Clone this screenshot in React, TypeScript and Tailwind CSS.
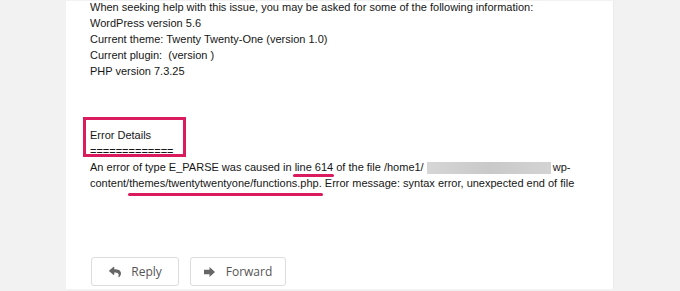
import React from "react";
import { FaReply } from "react-icons/fa";

const RED = "#da1b5e";

export default function App() {
  return (
    <div className="w-[680px] h-[291px] bg-[#f2f2f2] flex pl-[66px] pt-[1px] pb-[2px] overflow-hidden">
      <div className="w-[548px] bg-white flex flex-col pl-[24px] border-r border-[#ebebeb]">
        <div
          className="-mt-[2px] text-[11px] leading-[16px] text-[#161616]"
          style={{ fontFamily: '"Liberation Sans", Arial, sans-serif' }}
        >
          <div>When seeking help with this issue, you may be asked for some of the following information:</div>
          <div>WordPress version 5.6</div>
          <div>Current theme: Twenty Twenty-One (version 1.0)</div>
          <div>Current plugin: &nbsp;(version )</div>
          <div>PHP version 7.3.25</div>
          <div>&nbsp;</div>
          <div>&nbsp;</div>
          <div>&nbsp;</div>
          <div className="relative">
            <div>Error Details</div>
            <div>=============</div>
            <div
              className="absolute left-[-7px] top-[-10px] w-[103px] h-[40px] border-[3px]"
              style={{ borderColor: RED }}
            />
          </div>
          <div className="whitespace-nowrap">
            An error of type E_PARSE was caused in{" "}
            <span className="relative">
              line 614
              <span className="absolute left-[-2px] right-[-1px] bottom-[-4px] h-[3px] rounded-full" style={{ background: RED }} />
            </span>{" "}
            of the file /home1/
            <span className="inline-block ml-[3px] mr-[2px] w-[124px] h-[12px] align-middle bg-gradient-to-r from-[#d6d6d6] via-[#c9c9c9] to-[#d3d3d3]" />
            wp-
            <br />
            content/
            <span className="relative">
              themes/twentytwentyone/functions.php
              <span className="absolute left-[-1px] right-[-4px] bottom-[-7px] h-[3px] rounded-full" style={{ background: RED }} />
            </span>
            . Error message: syntax error, unexpected end of file
          </div>
        </div>
        <div
          className="mt-auto mb-[3px] ml-[1px] flex gap-[11px] text-[12px] text-[#555]"
          style={{ fontFamily: '"Open Sans", sans-serif' }}
        >
          <button className="w-[88px] h-[29px] border border-[#dcdcdc] rounded-[3px] bg-white flex items-center justify-center gap-[9px]">
            <FaReply className="w-[14px] h-[12px] text-[#666]" />
            <span>Reply</span>
          </button>
          <button className="w-[96px] h-[29px] border border-[#dcdcdc] rounded-[3px] bg-white flex items-center justify-center gap-[11px]">
            <svg width="11" height="10" viewBox="0 0 10 9">
              <path d="M0 2.5H5V0L10 4.5L5 9V6.5H0Z" fill="#666" />
            </svg>
            <span>Forward</span>
          </button>
        </div>
      </div>
    </div>
  );
}
